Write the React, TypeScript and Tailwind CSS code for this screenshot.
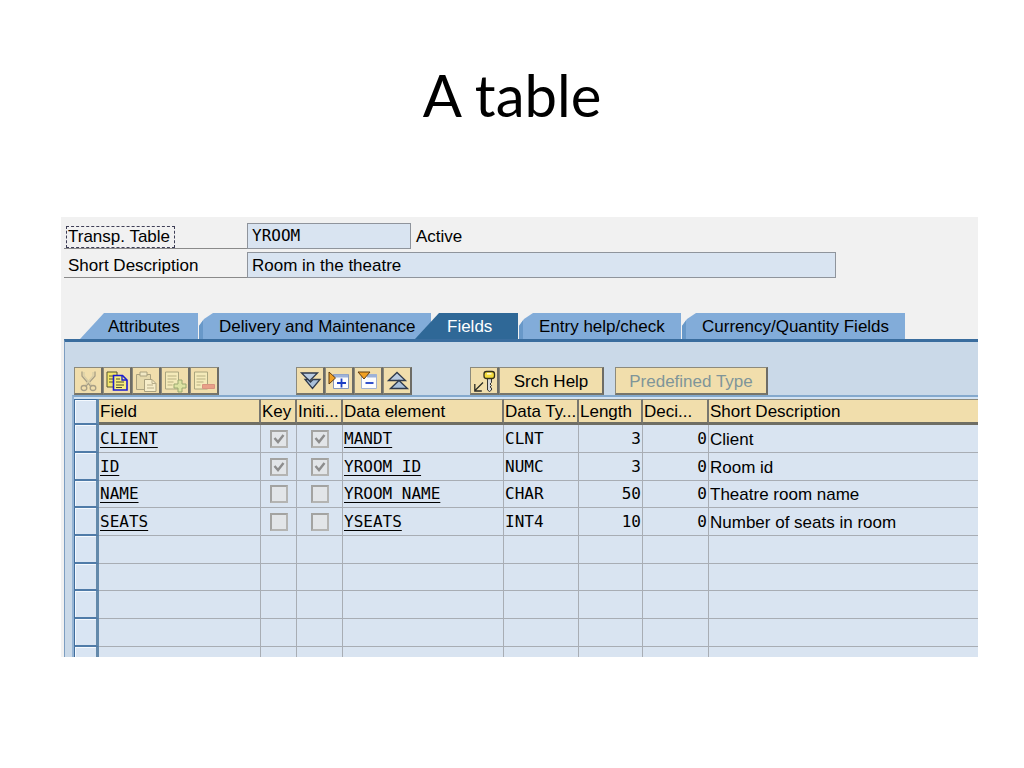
import React from "react";
import clsx from "clsx";

type Row = {
  field: string;
  key: boolean;
  initial: boolean;
  element: string;
  type: string;
  length: number;
  decimals: number;
  text: string;
};

const rows: Row[] = [
  { field: "CLIENT", key: true, initial: true, element: "MANDT", type: "CLNT", length: 3, decimals: 0, text: "Client" },
  { field: "ID", key: true, initial: true, element: "YROOM_ID", type: "NUMC", length: 3, decimals: 0, text: "Room id" },
  { field: "NAME", key: false, initial: false, element: "YROOM_NAME", type: "CHAR", length: 50, decimals: 0, text: "Theatre room name" },
  { field: "SEATS", key: false, initial: false, element: "YSEATS", type: "INT4", length: 10, decimals: 0, text: "Number of seats in room" },
];

const headings = ["Field", "Key", "Initi...", "Data element", "Data Ty...", "Length", "Deci...", "Short Description"];

const mono = "font-['DejaVu_Sans_Mono',monospace] text-[16px]";

function Icon({ children }: { children: React.ReactNode }) {
  return (
    <svg viewBox="0 0 26 25" className="block h-[25px] w-[26px]" fill="none" aria-hidden="true">
      {children}
    </svg>
  );
}

const icons = {
  cut: (
    <Icon>
      <g stroke="#a79e86" strokeWidth="1.3">
        <path d="M7 3.500V8l8.500 10M20 3.500V8l-9 10" />
        <path d="M9 4v4l7.500 9M18 4v4l-7.500 9" stroke="#d8cda6" />
        <ellipse cx="9" cy="20" rx="2.800" ry="2.500" />
        <ellipse cx="18" cy="20" rx="2.800" ry="2.500" />
      </g>
    </Icon>
  ),
  copy: (
    <Icon>
      <path d="M3 4h10v15H3z" fill="#f3e66a" stroke="#55552e" />
      <path d="M5 8h5M5 11h4M5 14h4" stroke="#55552e" />
      <path d="M9.500 7.500h9l4.500 4.500v10H9.500z" fill="#f7ee7c" stroke="#1b1bd0" strokeWidth="1.600" />
      <path d="M18 7.500V12h5" stroke="#1b1bd0" strokeWidth="1.300" />
      <path d="M12 11h4M12 14h8M12 17h8M12 19.500h6" stroke="#4d4d33" />
    </Icon>
  ),
  paste: (
    <Icon>
      <path d="M3.500 6.500h14v15h-14z" fill="#e6d9ab" stroke="#aaa17f" />
      <path d="M7 4h7v4H7z" fill="#f1e8c4" stroke="#aaa17f" />
      <path d="M11.500 11.500h7.500l4 4v8H11.500z" fill="#f6edc9" stroke="#aaa17f" />
      <path d="M19 11.500v4h4M14 17h6M14 20h7" stroke="#b8ae8a" />
    </Icon>
  ),
  insert: (
    <Icon>
      <path d="M3.500 4h13v17h-13z" fill="#f4eab9" stroke="#aaa57e" />
      <path d="M5.500 8h9M5.500 11h9M5.500 14h6M5.500 17h5" stroke="#b9b182" />
      <path d="M16 12h4v4h4v4h-4v4h-4v-4h-4v-4h4z" fill="#dce3a2" stroke="#9aa870" />
    </Icon>
  ),
  remove: (
    <Icon>
      <path d="M3.500 4h13v17h-13z" fill="#f4eab9" stroke="#aaa57e" />
      <path d="M5.500 8h9M5.500 11h9M5.500 14h7M5.500 17h4" stroke="#b9b182" />
      <path d="M11.500 16.500h12v4h-12z" fill="#e9a088" stroke="#d99480" />
    </Icon>
  ),
  down: (
    <Icon>
      <path d="M4.500 5h16l-8 8z" fill="#b9cbe0" stroke="#2f3a4c" strokeWidth="1.300" />
      <path d="M8 11.500h3l2.500 2.500 2.500-2.500h7l-7.500 9z" fill="#a9c0da" stroke="#2f3a4c" strokeWidth="1.300" />
    </Icon>
  ),
  expand: (
    <Icon>
      <path d="M7.500 6.500h15v14h-15z" fill="#fdfdfd" stroke="#8597bb" />
      <path d="M8 8h14" stroke="#9db2d8" strokeWidth="3" />
      <path d="M11 15h9M15.500 10.500v9" stroke="#1c3fc4" strokeWidth="1.800" />
      <path d="M3 4v12l6.500-6z" fill="#f0a024" stroke="#5f3c12" />
    </Icon>
  ),
  collapse: (
    <Icon>
      <path d="M6.500 6.500h15v14h-15z" fill="#fdfdfd" stroke="#a4b3cf" />
      <path d="M12 8h10" stroke="#9db2d8" strokeWidth="3" />
      <path d="M10.500 15h8" stroke="#1c3fc4" strokeWidth="1.800" />
      <path d="M3 4h12l-6 7z" fill="#f0a024" stroke="#5f3c12" />
    </Icon>
  ),
  up: (
    <Icon>
      <path d="M4.500 12.500l8.500-8 8.500 8z" fill="#b9cbe0" stroke="#2f3a4c" strokeWidth="1.300" />
      <path d="M6.500 20.500l8.500-8 8.500 8z" fill="#a9c0da" stroke="#2f3a4c" strokeWidth="1.300" />
    </Icon>
  ),
  key: (
    <Icon>
      <path d="M12 14.500L4 22.500M3.800 16v7h7" stroke="#2b2b25" strokeWidth="1.300" />
      <path d="M16.500 10v12l2 1.500 2-1.500v-2l-1.500-1 1.500-1.500-1.500-1.500 1.500-1.500V10z" fill="#d8d8d8" stroke="#333" />
      <rect x="13" y="3.500" width="10.500" height="7" rx="2.500" fill="#f5dc3c" stroke="#33301c" strokeWidth="1.300" />
      <path d="M16 5.800h4.500" stroke="#fffbe0" strokeWidth="1.500" />
    </Icon>
  ),
};

function ToolButton({ label, wide, disabled, children }: { label?: string; wide?: string; disabled?: boolean; children: React.ReactNode }) {
  return (
    <button
      type="button"
      aria-label={label}
      disabled={disabled}
      className={clsx(
        "flex h-7 shrink-0 items-center justify-center border-t border-r-2 border-b-2 border-l border-t-[#8c8a7c] border-r-[#6d6c66] border-b-[#77756b] border-l-[#8c8a7c] bg-[#f1deac] whitespace-nowrap",
        wide ? clsx(wide, "pt-0.5") : "w-[29px]",
        wide && disabled && "text-[#7f9599]",
      )}
    >
      {children}
    </button>
  );
}

function Tick({ label, checked }: { label: string; checked: boolean }) {
  return (
    <span className="mx-auto grid size-[18px]">
      <input
        type="checkbox"
        aria-label={label}
        checked={checked}
        readOnly
        disabled
        className="col-start-1 row-start-1 size-[18px] appearance-none border-2 border-t-[#a3a3a1] border-r-[#b4b4b2] border-b-[#b4b4b2] border-l-[#a3a3a1] bg-[#e2e5e8]"
      />
      {checked && (
        <svg viewBox="0 0 18 18" className="pointer-events-none col-start-1 row-start-1 size-[18px]" fill="none" aria-hidden="true">
          <path d="M4.500 8l3.500 4 5.500-7" stroke="#8d8d8d" strokeWidth="2.400" />
        </svg>
      )}
    </span>
  );
}

const slant = "[clip-path:polygon(24px_0,100%_0,100%_100%,0_100%)]";
const curve = "border-l-4 border-[#6898c8] [clip-path:polygon(0_50%,5px_6px,14px_0,100%_0,100%_100%,0_100%)]";

const tabs = [
  { name: "Attributes", look: clsx("w-[118px] bg-[#82acd9] pl-7", slant) },
  { name: "Delivery and Maintenance", look: clsx("ml-px w-[232px] bg-[#82acd9] pl-4", curve) },
  { name: "Fields", look: clsx("-ml-4 w-[103px] bg-[#2f6897] pl-8 text-white", slant) },
  { name: "Entry help/check", look: clsx("ml-px w-[162px] bg-[#82acd9] pl-4", curve) },
  { name: "Currency/Quantity Fields", look: clsx("ml-px w-[223px] bg-[#82acd9] pl-4", curve) },
];

const field = "border border-[#8f949c] bg-[#d9e4f1] pl-1 outline-none";
const selector = "border-r-3 border-l border-r-[#6389ab] border-b-[#4f7ba8] border-l-[#3f6c9c] bg-[#d9e5f3] p-0 shadow-[inset_1px_1px_0_#f4f9fe]";
const cell = "border-r border-[#a8adb4] bg-[#d9e4f1] py-0 pr-px pl-px leading-5 whitespace-nowrap last:border-r-0";
const link = "underline decoration-1 underline-offset-3 [text-decoration-skip-ink:none]";

export default function App() {
  return (
    <main className="min-h-screen bg-white pr-[46px] pb-10 pl-[61px] font-['Liberation_Sans',Arial,sans-serif] text-[17px] text-black">
      <h1 className="pt-[59px] pr-[15px] text-center font-['Lato',sans-serif] text-[58px] leading-[72px]">A table</h1>

      <section className="mt-[86px] overflow-hidden bg-[#f1f1f1] pt-1.5 pl-[3px]">
        <form className="flex flex-col gap-[3px]">
          <div className="flex h-[26px]">
            <div className="flex w-[183px] items-center border-b border-[#8a8a8a] pt-0.5 pl-0.5">
              <label htmlFor="table-name" className="border border-dashed border-[#3d3d55] pr-1 pl-px leading-5">
                Transp. Table
              </label>
            </div>
            <input id="table-name" readOnly defaultValue="YROOM" className={clsx("w-[164px]", field, mono)} />
            <span className="flex items-center pt-0.5 pl-[5px]">Active</span>
          </div>
          <div className="flex h-[26px]">
            <div className="flex w-[183px] items-center border-b border-[#8a8a8a] pt-0.5 pl-1">
              <label htmlFor="table-text">Short Description</label>
            </div>
            <input id="table-text" readOnly defaultValue="Room in the theatre" className={clsx("w-[589px] pt-0.5", field)} />
          </div>
        </form>

        <div role="tablist" className="mt-[35px] flex pl-4">
          {tabs.map((tab) => (
            <button
              key={tab.name}
              type="button"
              role="tab"
              aria-selected={tab.name === "Fields"}
              className={clsx("h-[26px] shrink-0 pt-px text-left whitespace-nowrap", tab.look)}
            >
              {tab.name}
            </button>
          ))}
        </div>

        <div className="border-t-3 border-l border-t-[#3a6d9e] border-l-[#7c9dc0] bg-[#cad9e8] pt-[25px]">
          <div className="flex pl-[9px]">
            <div className="flex">
              <ToolButton label="Cut" disabled>{icons.cut}</ToolButton>
              <ToolButton label="Copy">{icons.copy}</ToolButton>
              <ToolButton label="Paste" disabled>{icons.paste}</ToolButton>
              <ToolButton label="Insert row" disabled>{icons.insert}</ToolButton>
              <ToolButton label="Delete row" disabled>{icons.remove}</ToolButton>
            </div>
            <div className="ml-[77px] flex">
              <ToolButton label="Expand all">{icons.down}</ToolButton>
              <ToolButton label="Expand">{icons.expand}</ToolButton>
              <ToolButton label="Collapse">{icons.collapse}</ToolButton>
              <ToolButton label="Collapse all">{icons.up}</ToolButton>
            </div>
            <div className="ml-[58px] flex">
              <ToolButton label="Key search">{icons.key}</ToolButton>
              <ToolButton wide="w-[105px]">Srch Help</ToolButton>
            </div>
            <div className="ml-[11px] flex">
              <ToolButton wide="w-[153px]" disabled>Predefined Type</ToolButton>
            </div>
          </div>

          <div className="ml-[7px] border-t-2 border-l-2 border-t-[#84a9cd] border-l-[#95b4d4] bg-[#d3e3f3] pt-0.5">
            <table className="w-full table-fixed border-separate border-spacing-0">
              <colgroup>
                <col className="w-[25px]" />
                <col className="w-[162px]" />
                <col className="w-[36px]" />
                <col className="w-[46px]" />
                <col className="w-[161px]" />
                <col className="w-[75px]" />
                <col className="w-[64px]" />
                <col className="w-[66px]" />
                <col />
              </colgroup>
              <thead>
                <tr className="h-[26px]">
                  <td className={clsx(selector, "border-t border-b-2 border-t-[#3f6c9c]")} />
                  {headings.map((name) => (
                    <th
                      key={name}
                      scope="col"
                      className="overflow-hidden border-t border-r-2 border-b-3 border-t-[#8c8a7c] border-r-[#77766e] border-b-[#6f6e64] bg-[#f1deac] pt-0.5 pr-0 pb-0 pl-px text-left leading-5 font-normal whitespace-nowrap last:border-r-0"
                    >
                      {name}
                    </th>
                  ))}
                </tr>
              </thead>
              <tbody>
                {rows.map((row) => (
                  <tr key={row.field} className="h-7 nth-[3n]:h-[27px]">
                    <td className={clsx(selector, "border-b-2")} />
                    <td className={clsx(cell, mono, "border-b")}>
                      <a href="#field" className={link}>{row.field}</a>
                    </td>
                    <td className={clsx(cell, "border-b")}><Tick label={`${row.field} key`} checked={row.key} /></td>
                    <td className={clsx(cell, "border-b")}><Tick label={`${row.field} initial`} checked={row.initial} /></td>
                    <td className={clsx(cell, mono, "border-b")}>
                      <a href="#element" className={link}>{row.element}</a>
                    </td>
                    <td className={clsx(cell, mono, "border-b")}>{row.type}</td>
                    <td className={clsx(cell, mono, "border-b text-right")}>{row.length}</td>
                    <td className={clsx(cell, mono, "border-b text-right")}>{row.decimals}</td>
                    <td className={clsx(cell, "border-b pt-0.5")}>{row.text}</td>
                  </tr>
                ))}
                {[5, 6, 7, 8].map((n) => (
                  <tr key={n} className="h-7 nth-[3n]:h-[27px]">
                    <td className={clsx(selector, "border-b-2")} />
                    {headings.map((name) => (
                      <td key={name} className={clsx(cell, "border-b")} />
                    ))}
                  </tr>
                ))}
                <tr>
                  <td className={clsx(selector, "h-2.5")} />
                  {headings.map((name) => (
                    <td key={name} className={cell} />
                  ))}
                </tr>
              </tbody>
            </table>
          </div>
        </div>
      </section>
    </main>
  );
}
